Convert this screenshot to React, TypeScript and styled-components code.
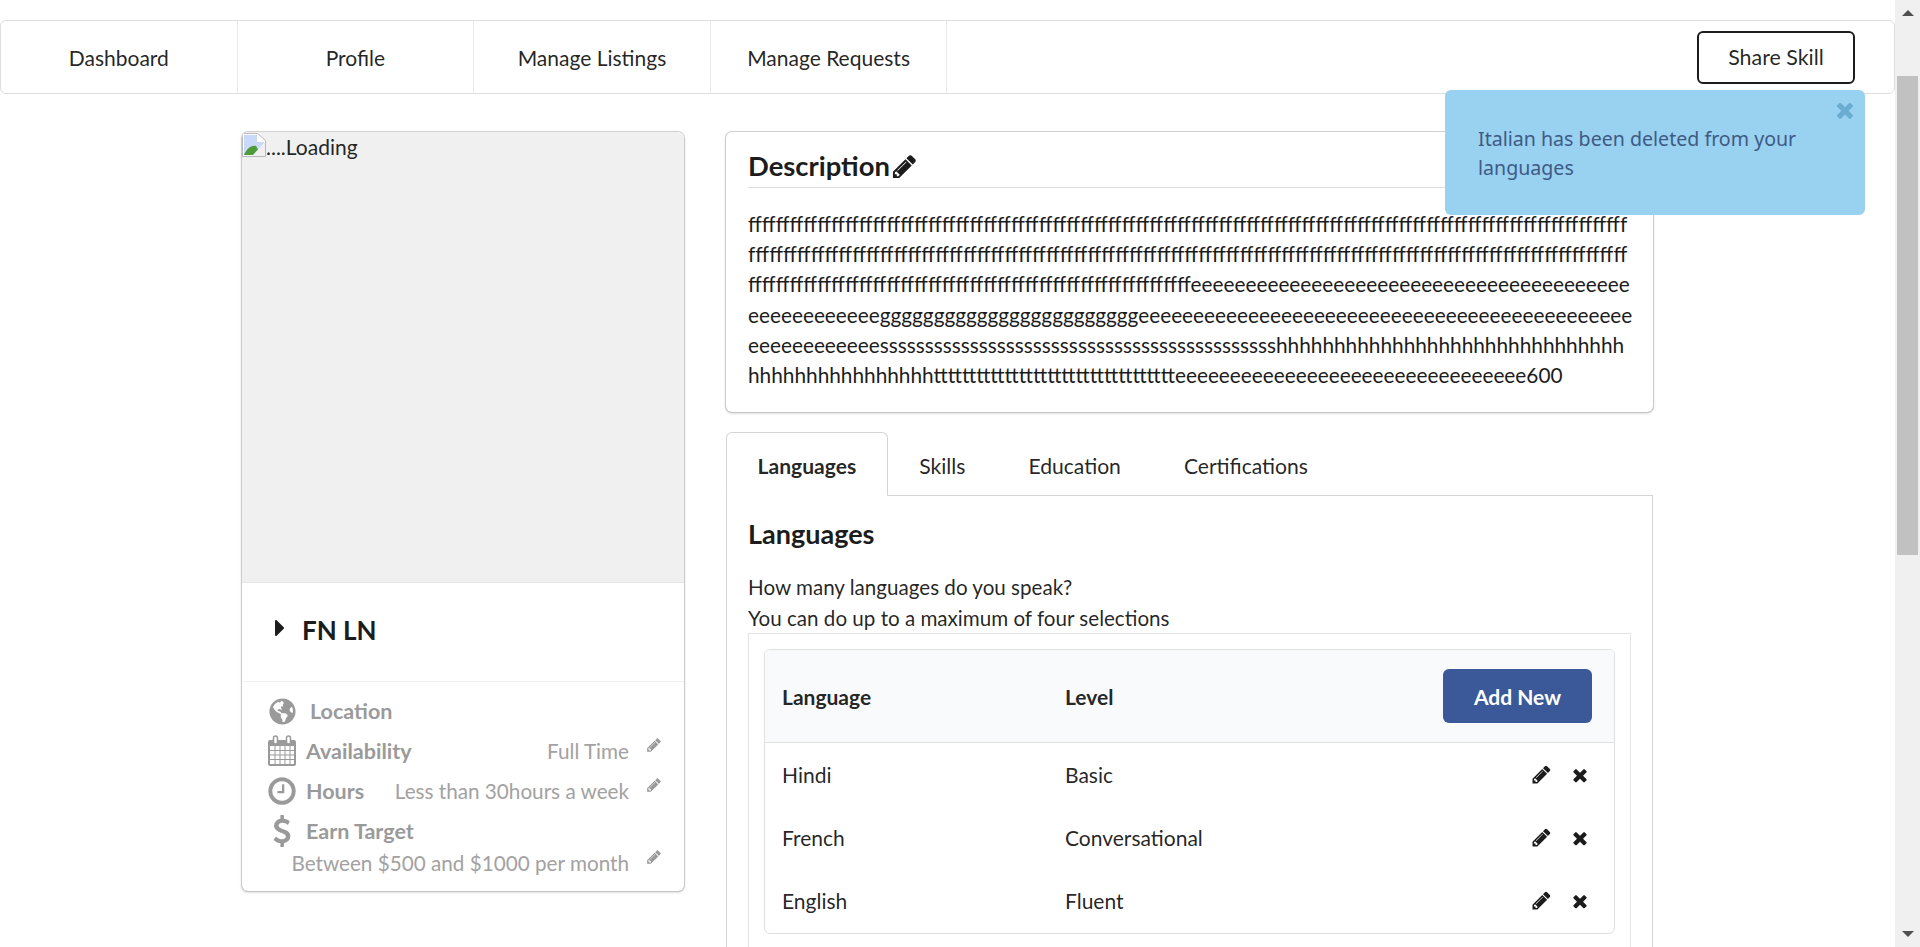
import React from 'react'
import styled, { createGlobalStyle } from 'styled-components'
import { FaGlobeAmericas } from 'react-icons/fa'

const GlobalStyle = createGlobalStyle`
  html, body {
    margin: 0;
    height: 100%;
    overflow: hidden;
    background: #fff;
  }
  * { box-sizing: border-box; }
  body {
    font-family: Lato, "Liberation Sans", sans-serif;
    font-size: 21px;
    color: rgba(0, 0, 0, 0.87);
  }
`

const Screen = styled.div`
  display: flex;
  height: 947px;
  overflow: hidden;
`
const Page = styled.div`
  flex: 1;
  min-width: 0;
  padding-top: 20px;
  position: relative;
`
const ScrollTrack = styled.div`
  width: 25px;
  background: #f0f0f0;
  display: flex;
  flex-direction: column;
  align-items: center;
  padding: 10px 0;
  flex-shrink: 0;
`
const ScrollArrow = styled.div<{ $down?: boolean }>`
  width: 0;
  height: 0;
  border-left: 6px solid transparent;
  border-right: 6px solid transparent;
  border-bottom: ${({ $down }) => ($down ? '0' : '6px solid #505050')};
  border-top: ${({ $down }) => ($down ? '6px solid #505050' : '0')};
  margin-top: ${({ $down }) => ($down ? 'auto' : '0')};
`
const ScrollThumb = styled.div`
  width: 21px;
  height: 479px;
  margin-top: 60px;
  background: #c1c1c1;
`
const Menu = styled.nav`
  display: flex;
  height: 74px;
  border: 1px solid rgba(34, 36, 38, 0.15);
  border-radius: 6px;
`
const MenuItem = styled.a`
  width: 236.6px;
  display: flex;
  align-items: center;
  justify-content: center;
  border-right: 1px solid rgba(34, 36, 38, 0.1);
`
const MenuRight = styled.div`
  margin-left: auto;
  display: flex;
  align-items: center;
  padding-right: 39px;
`
const ShareButton = styled.button`
  width: 158px;
  height: 53px;
  background: #fff;
  border: 2px solid #1b1c1d;
  border-radius: 6px;
  font: 400 21.4px Lato, sans-serif;
  color: rgba(0, 0, 0, 0.87);
`
const Toast = styled.div`
  position: absolute;
  top: 90px;
  left: 1445px;
  width: 420px;
  height: 125px;
  padding: 34px 33px;
  background: #99d1f0;
  border-radius: 6px;
  font-family: "Noto Sans", sans-serif;
  font-size: 19.6px;
  line-height: 29px;
  color: #3f5a85;
`
const ToastClose = styled.span`
  position: absolute;
  top: 8px;
  right: 8px;
  color: #6badd0;
  display: flex;
`
const Glyph = styled.svg<{ $size: number }>`
  width: ${({ $size }) => $size}px;
  height: ${({ $size }) => $size}px;
  fill: currentColor;
  flex-shrink: 0;
`
const Columns = styled.div`
  display: flex;
  padding: 38px 0 0 242px;
  gap: 42px;
  align-items: flex-start;
`
const ProfileCard = styled.aside`
  width: 442px;
  height: 759px;
  border-radius: 6px;
  box-shadow: 0 1px 3px 0 #bcbdbd, 0 0 0 1px #d4d4d5;
  overflow: hidden;
  flex-shrink: 0;
`
const PhotoSlot = styled.div`
  height: 451px;
  background: #f0f0f0;
  border-bottom: 1px solid #e6e6e6;
  line-height: 30px;
  display: flex;
  align-items: flex-start;
`
const BrokenImage = styled.svg`
  width: 24px;
  height: 24px;
  flex-shrink: 0;
  margin-top: 1px;
`
const NameBlock = styled.div`
  height: 99px;
  display: flex;
  align-items: center;
  padding: 0 0 5px 24px;
  gap: 8px;
  border-bottom: 1px solid #f0f0f0;
  font-size: 26px;
  font-weight: 700;
  color: #1c1c1c;
`
const NameCaret = styled.span`
  display: flex;
  margin-top: -4px;
  color: #1c1c1c;
`
const Details = styled.div`
  padding: 9px 22px 0 25px;
  font-size: 20.7px;
  color: #a3a1a1;
`
const DetailRow = styled.div<{ $compact?: boolean }>`
  display: flex;
  align-items: center;
  height: ${({ $compact }) => ($compact ? '24px' : '40px')};
`
const DetailIcon = styled.span`
  width: 30px;
  display: flex;
  justify-content: center;
  color: #9a9a9a;
  margin-right: 9px;
  flex-shrink: 0;
`
const GlobeIcon = styled(FaGlobeAmericas)`
  font-size: 27px;
`
const DetailLabel = styled.span<{ $indent?: boolean }>`
  font-size: 21.5px;
  font-weight: 700;
  color: #9a9a9a;
  white-space: nowrap;
  margin-left: ${({ $indent }) => ($indent ? '4px' : '0')};
`
const DetailValue = styled.span`
  margin-left: auto;
  white-space: nowrap;
`
const DetailEdit = styled.span`
  width: 33px;
  display: flex;
  justify-content: flex-end;
  margin-top: -13px;
  color: #9a9a9a;
`
const Main = styled.main`
  width: 927px;
  flex-shrink: 0;
`
const DescriptionCard = styled.section`
  height: 280px;
  padding: 17px 22px;
  border-radius: 6px;
  box-shadow: 0 1px 3px 0 #bcbdbd, 0 0 0 1px #d4d4d5;
`
const CardTitle = styled.h3`
  margin: 0 0 21px;
  padding-bottom: 4px;
  border-bottom: 1px solid #ddd;
  font-size: 27.4px;
  font-weight: 700;
  line-height: 34px;
  display: flex;
  align-items: center;
  gap: 1px;
  color: #1c1c1c;
`
const DescriptionText = styled.p`
  margin: 0;
  width: 885px;
  font-size: 20.8px;
  line-height: 30.2px;
  word-break: break-all;
  color: #1c1c1c;
`
const TabBar = styled.div`
  display: flex;
  margin-top: 20px;
  height: 64px;
  border-bottom: 1px solid #d4d4d5;
`
const Tab = styled.div<{ $active?: boolean }>`
  padding: 2px 30.5px 0;
  display: flex;
  align-items: center;
  height: 64px;
  border: 1px solid ${({ $active }) => ($active ? '#d4d4d5' : 'transparent')};
  border-bottom-color: ${({ $active }) => ($active ? '#fff' : 'transparent')};
  border-radius: 6px 6px 0 0;
  font-size: 21.1px;
  font-weight: ${({ $active }) => ($active ? 700 : 400)};
`
const TabPanel = styled.section`
  border: 1px solid #d4d4d5;
  border-top: 0;
  height: 500px;
  padding: 21px 21px 0;
`
const PanelTitle = styled.h3`
  margin: 0 0 21px;
  font-size: 27px;
  font-weight: 700;
  line-height: 34px;
  color: #1c1c1c;
`
const Hint = styled.p`
  margin: 0;
  font-size: 20.6px;
  line-height: 30.6px;
`
const TableBox = styled.div`
  width: 883px;
  padding: 15px;
  border: 1px solid #e4e4e4;
  border-bottom: 0;
  height: 400px;
`
const LangTable = styled.div`
  border: 1px solid #e0e0e0;
  border-radius: 6px;
  overflow: hidden;
  padding-bottom: 1px;
`
const HeadRow = styled.div`
  display: flex;
  align-items: center;
  height: 93px;
  padding: 0 22px 0 17px;
  background: #f9fafb;
  border-bottom: 1px solid #e0e0e0;
  font-weight: 700;
`
const BodyRow = styled.div`
  display: flex;
  align-items: center;
  height: 63px;
  padding: 0 24px 0 17px;
`
const LangCell = styled.div`
  width: 283px;
`
const LevelCell = styled.div`
  flex: 1;
`
const AddButton = styled.button`
  width: 149px;
  height: 54px;
  border: 0;
  border-radius: 6px;
  background: #3b5998;
  color: #fff;
  font: 700 21px Lato, sans-serif;
`
const RowActions = styled.div`
  display: flex;
  align-items: center;
  gap: 18px;
  color: #1c1c1c;
`

// font awesome 4 outlines, the react-icons set only has the newer drawings
const PENCIL = 'M491 1536l91-91-235-235-91 91v107h128v128h107zm523-928q0-22-22-22-10 0-17 7l-542 542q-7 7-7 17 0 22 22 22 10 0 17-7l542-542q7-7 7-17zm-54-192l416 416-832 832h-416v-416zm683 96q0 53-37 90l-166 166-416-416 166-165q36-38 90-38 53 0 91 38l235 234q37 39 37 91z'
const TIMES = 'M1490 1322q0 40-28 68l-136 136q-28 28-68 28t-68-28l-294-294-294 294q-28 28-68 28t-68-28l-136-136q-28-28-28-68t28-68l294-294-294-294q-28-28-28-68t28-68l136-136q28-28 68-28t68 28l294 294 294-294q28-28 68-28t68 28l136 136q28 28 28 68t-28 68l-294 294 294 294q28 28 28 68z'
const CLOCK = 'M1024 544v448q0 14-9 23t-23 9h-320q-14 0-23-9t-9-23v-64q0-14 9-23t23-9h224v-352q0-14 9-23t23-9h64q14 0 23 9t9 23zm416 352q0-148-73-273t-198-198-273-73-273 73-198 198-73 273 73 273 198 198 273 73 273-73 198-198 73-273zm224 0q0 209-103 385.5t-279.5 279.5-385.5 103-385.5-103-279.5-279.5-103-385.5 103-385.5 279.5-279.5 385.5-103 385.5 103 279.5 279.5 103 385.5z'
const CARET = 'M1152 896q0 26-19 45l-448 448q-19 19-45 19t-45-19-19-45v-896q0-26 19-45t45-19 45 19l448 448q19 19 19 45z'
const DOLLAR = 'M1362 1185q0 153-99.5 263.5t-258.5 136.5v175q0 14-9 23t-23 9h-135q-13 0-22.5-9.5t-9.5-22.5v-175q-66-9-127.5-31t-101.5-44.5-74-48-46.5-37.5-17.5-18q-17-21-2-41l103-135q7-10 23-12 15-2 24 9l2 2q113 99 243 125 37 8 74 8 81 0 142.5-43t61.5-122q0-28-15-53t-33.5-42-58.5-37.5-66-32-80-32.5q-39-16-61.5-25t-61.5-26.5-62.5-31-56.5-35.5-53.5-42.5-43.5-49-35.5-58-21-66.5-8.5-78q0-138 98-242t255-134v-180q0-13 9.5-22.5t22.5-9.5h135q14 0 23 9t9 23v176q57 6 110.5 23t87 33.5 63.5 37.5 39 29 15 14q17 18 5 38l-81 146q-8 15-23 16-14 3-27-7-3-3-14.5-12t-39-26.5-58.5-32-74.5-26-85.5-11.5q-95 0-155 43t-60 111q0 26 8.5 48t29.5 41.5 39.5 33 56 31 60.5 27 70 27.5q53 20 81 31.5t76 35 75.5 42.5 62 50 53 63.5 31.5 76.5 13 94z'

const Icon = ({ d, size }: { d: string; size: number }) => (
  <Glyph $size={size} viewBox="0 0 1792 1792">
    <path d={d} />
  </Glyph>
)

const CalendarIcon = () => (
  <svg width="30" height="32" viewBox="0 0 30 32" fill="none">
    <rect x="1" y="5" width="28" height="26" rx="2" fill="#9a9a9a" />
    <rect x="3" y="11" width="24" height="18" fill="#fff" />
    <path d="M3 15.5h24M3 20h24M3 24.5h24M8 11v18M13 11v18M18 11v18M23 11v18" stroke="#9a9a9a" strokeWidth="1" />
    <rect x="6.5" y="1" width="4" height="8" rx="2" fill="#fff" stroke="#9a9a9a" strokeWidth="1.5" />
    <rect x="19.5" y="1" width="4" height="8" rx="2" fill="#fff" stroke="#9a9a9a" strokeWidth="1.5" />
  </svg>
)

const descriptionText =
  'f'.repeat(318) + 'e'.repeat(52) + 'g'.repeat(24) + 'e'.repeat(57) + 's'.repeat(44) +
  'h'.repeat(46) + 't'.repeat(34) + 'e'.repeat(32) + '600'

const languages = [
  { name: 'Hindi', level: 'Basic' },
  { name: 'French', level: 'Conversational' },
  { name: 'English', level: 'Fluent' },
]

export default function App() {
  return (
    <Screen>
      <GlobalStyle />
      <Page>
        <Menu>
          <MenuItem>Dashboard</MenuItem>
          <MenuItem>Profile</MenuItem>
          <MenuItem>Manage Listings</MenuItem>
          <MenuItem>Manage Requests</MenuItem>
          <MenuRight>
            <ShareButton>Share Skill</ShareButton>
          </MenuRight>
        </Menu>
        <Toast>
          <ToastClose><Icon d={TIMES} size={24} /></ToastClose>
          Italian has been deleted from your languages
        </Toast>
        <Columns>
          <ProfileCard>
            <PhotoSlot>
              <BrokenImage viewBox="0 0 24 24">
                <path d="M0.5 0.5h15l8 7v16h-23z" fill="#fff" stroke="#b9b9b9" />
                <path d="M2 2h13v7h7v13H2z" fill="#c9daf8" />
                <path d="M2 22c3-7 8-10 12-9l5 9z" fill="#4f9a3a" />
                <path d="M23 9L10 23h13z" fill="#f0f0f0" />
              </BrokenImage>
              ....Loading
            </PhotoSlot>
            <NameBlock>
              <NameCaret><Icon d={CARET} size={28} /></NameCaret>
              FN LN
            </NameBlock>
            <Details>
              <DetailRow>
                <DetailIcon><GlobeIcon /></DetailIcon>
                <DetailLabel $indent>Location</DetailLabel>
              </DetailRow>
              <DetailRow>
                <DetailIcon><CalendarIcon /></DetailIcon>
                <DetailLabel>Availability</DetailLabel>
                <DetailValue>Full Time</DetailValue>
                <DetailEdit><Icon d={PENCIL} size={16} /></DetailEdit>
              </DetailRow>
              <DetailRow>
                <DetailIcon><Icon d={CLOCK} size={32} /></DetailIcon>
                <DetailLabel>Hours</DetailLabel>
                <DetailValue>Less than 30hours a week</DetailValue>
                <DetailEdit><Icon d={PENCIL} size={16} /></DetailEdit>
              </DetailRow>
              <DetailRow>
                <DetailIcon><Icon d={DOLLAR} size={32} /></DetailIcon>
                <DetailLabel>Earn Target</DetailLabel>
              </DetailRow>
              <DetailRow $compact>
                <DetailValue>Between $500 and $1000 per month</DetailValue>
                <DetailEdit><Icon d={PENCIL} size={16} /></DetailEdit>
              </DetailRow>
            </Details>
          </ProfileCard>
          <Main>
            <DescriptionCard>
              <CardTitle>
                Description
                <Icon d={PENCIL} size={27} />
              </CardTitle>
              <DescriptionText>{descriptionText}</DescriptionText>
            </DescriptionCard>
            <TabBar>
              <Tab $active>Languages</Tab>
              <Tab>Skills</Tab>
              <Tab>Education</Tab>
              <Tab>Certifications</Tab>
            </TabBar>
            <TabPanel>
              <PanelTitle>Languages</PanelTitle>
              <Hint>How many languages do you speak?</Hint>
              <Hint>You can do up to a maximum of four selections</Hint>
              <TableBox>
                <LangTable>
                  <HeadRow>
                    <LangCell>Language</LangCell>
                    <LevelCell>Level</LevelCell>
                    <AddButton>Add New</AddButton>
                  </HeadRow>
                  {languages.map((l) => (
                    <BodyRow key={l.name}>
                      <LangCell>{l.name}</LangCell>
                      <LevelCell>{l.level}</LevelCell>
                      <RowActions>
                        <Icon d={PENCIL} size={21} />
                        <Icon d={TIMES} size={20} />
                      </RowActions>
                    </BodyRow>
                  ))}
                </LangTable>
              </TableBox>
            </TabPanel>
          </Main>
        </Columns>
      </Page>
      <ScrollTrack>
        <ScrollArrow />
        <ScrollThumb />
        <ScrollArrow $down />
      </ScrollTrack>
    </Screen>
  )
}
